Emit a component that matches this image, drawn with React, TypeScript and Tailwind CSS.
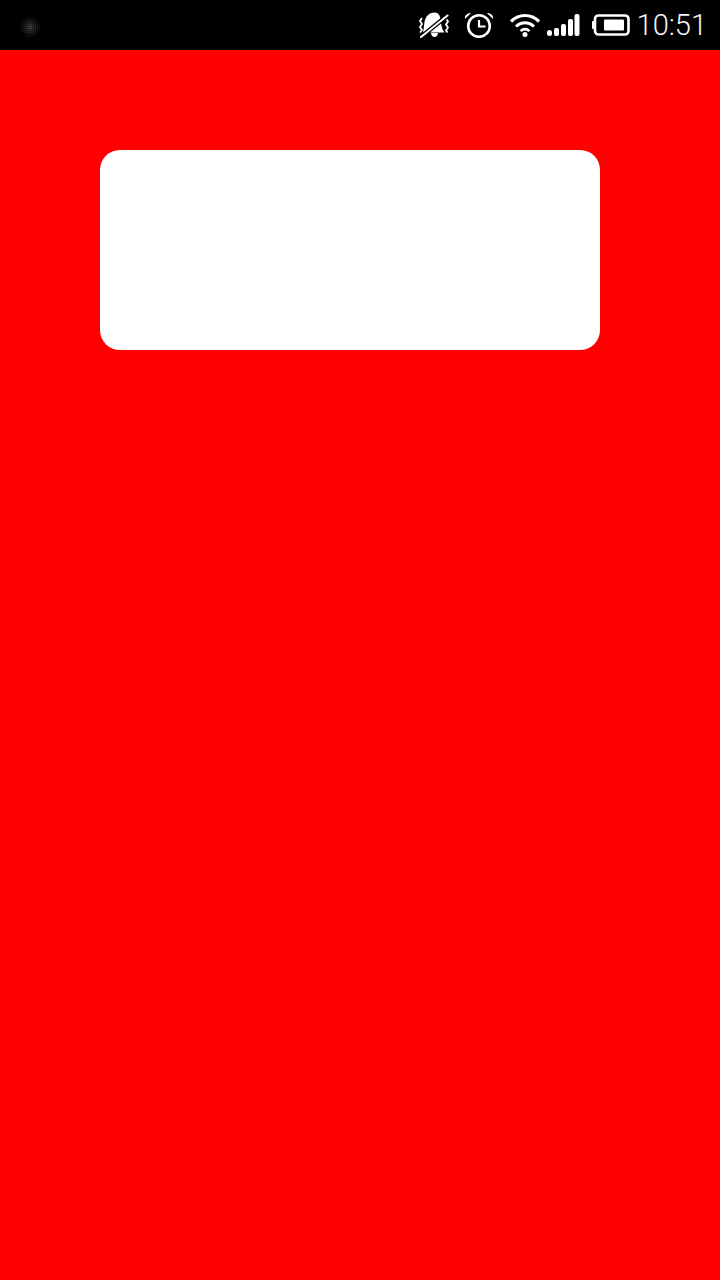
function MuteIcon() {
  return (
    <svg width="31" height="26" viewBox="0 0 31 26" className="block">
      <path d="M16.500 0.500c-5.500 0-9 4-10 9.500-.6 4-.8 7-1.500 10.500h21.500c-2-2.500-3-5.500-3.500-9.500C22.500 5 21.500 0.500 16.500 0.500z" fill="#fff" />
      <path d="M13 21h7c0 2.200-1.500 4-3.500 4S13 23.200 13 21z" fill="#fff" />
      <path d="M3 25 30 3" stroke="#000" strokeWidth="4.500" />
      <path d="M3 25 29.500 3.500" stroke="#fff" strokeWidth="2" strokeLinecap="round" />
      <path d="M4 6 2 9l2 3-2 3 2 3-2 2.500" stroke="#fff" strokeWidth="1.800" fill="none" />
      <path d="M28.500 7.500l1.500 2-2 3 2 3-2 3 1.500 2" stroke="#fff" strokeWidth="1.800" fill="none" />
    </svg>
  );
}

function AlarmIcon() {
  return (
    <svg width="30" height="26" viewBox="0 0 30 26" className="block">
      <circle cx="15" cy="14" r="10.800" stroke="#fff" strokeWidth="2.600" fill="none" />
      <path d="M15 8v6.500h6.500" stroke="#fff" strokeWidth="2.200" fill="none" />
      <path d="M1 7C.5 3.500 3 1 7 1z" fill="#fff" />
      <path d="M29 7c.5-3.500-2-6-6-6z" fill="#fff" />
    </svg>
  );
}

function WifiIcon() {
  return (
    <svg width="32" height="26" viewBox="0 0 32 26" className="block">
      <path d="M2 9.500c8-8 20-8 28 0" stroke="#fff" strokeWidth="3.200" fill="none" />
      <path d="M7 14.500c5.500-5 12.500-5 18 0" stroke="#fff" strokeWidth="3" fill="none" />
      <path d="M11.500 19c3-2.500 6-2.500 9 0" stroke="#fff" strokeWidth="2.600" fill="none" />
      <circle cx="16" cy="22.500" r="2.500" fill="#fff" />
    </svg>
  );
}

function SignalIcon() {
  return (
    <svg width="34" height="24" viewBox="0 0 34 24" className="block">
      <rect x="1" y="17" width="5" height="6" rx="2.500" fill="#fff" />
      <rect x="8" y="15" width="5" height="8" rx="2" fill="#fff" />
      <rect x="15" y="11" width="5" height="12" rx="2" fill="#fff" />
      <rect x="22" y="6" width="5" height="17" rx="2" fill="#fff" />
      <rect x="28.500" y="1" width="5" height="22" rx="2" fill="#fff" />
    </svg>
  );
}

function BatteryIcon() {
  return (
    <svg width="38" height="22" viewBox="0 0 38 22" className="block">
      <rect x="3" y="1.500" width="33.500" height="19" rx="3.500" stroke="#fff" strokeWidth="2.600" fill="none" />
      <rect x="0" y="7" width="3" height="8" rx="1" fill="#fff" />
      <rect x="12" y="5.500" width="20" height="11" rx="1" fill="#fff" />
    </svg>
  );
}

// faint dotted smudge at the left of the status bar
function NoiseDot() {
  const dots: { x: number; y: number; o: number }[] = [];
  for (let y = 1; y < 20; y += 2) {
    for (let x = 1; x < 20; x += 2) {
      const d = Math.hypot(x - 10, y - 10);
      if (d < 9.5) dots.push({ x, y, o: Math.max(0.12, 0.6 - d * 0.06) });
    }
  }
  return (
    <svg width="20" height="20" viewBox="0 0 20 20" className="block">
      {dots.map((d) => (
        <rect key={`${d.x}-${d.y}`} x={d.x - 0.5} y={d.y - 0.5} width="1.200" height="1.200" fill="#fff" opacity={d.o} />
      ))}
    </svg>
  );
}

export default function App() {
  return (
    <div className="min-h-[1280px] bg-[#ff0000] flex flex-col">
      <div className="h-[50px] bg-black flex items-center relative pr-[13px] justify-end">
        <div className="absolute left-[20px] top-[17px]">
          <NoiseDot />
        </div>
        <div className="flex items-center font-['Roboto',sans-serif]">
          <div className="mr-[15px]"><MuteIcon /></div>
          <div className="mr-[15px]"><AlarmIcon /></div>
          <div className="mr-[5px]"><WifiIcon /></div>
          <div className="mr-[12px]"><SignalIcon /></div>
          <div className="mr-[7px]"><BatteryIcon /></div>
          <span className="text-[29px] leading-none font-light text-[#f2f2f2]">10:51</span>
        </div>
      </div>
      <div className="pt-[100px] pl-[100px]">
        <div className="w-[500px] h-[200px] bg-white rounded-[20px]" />
      </div>
    </div>
  );
}
